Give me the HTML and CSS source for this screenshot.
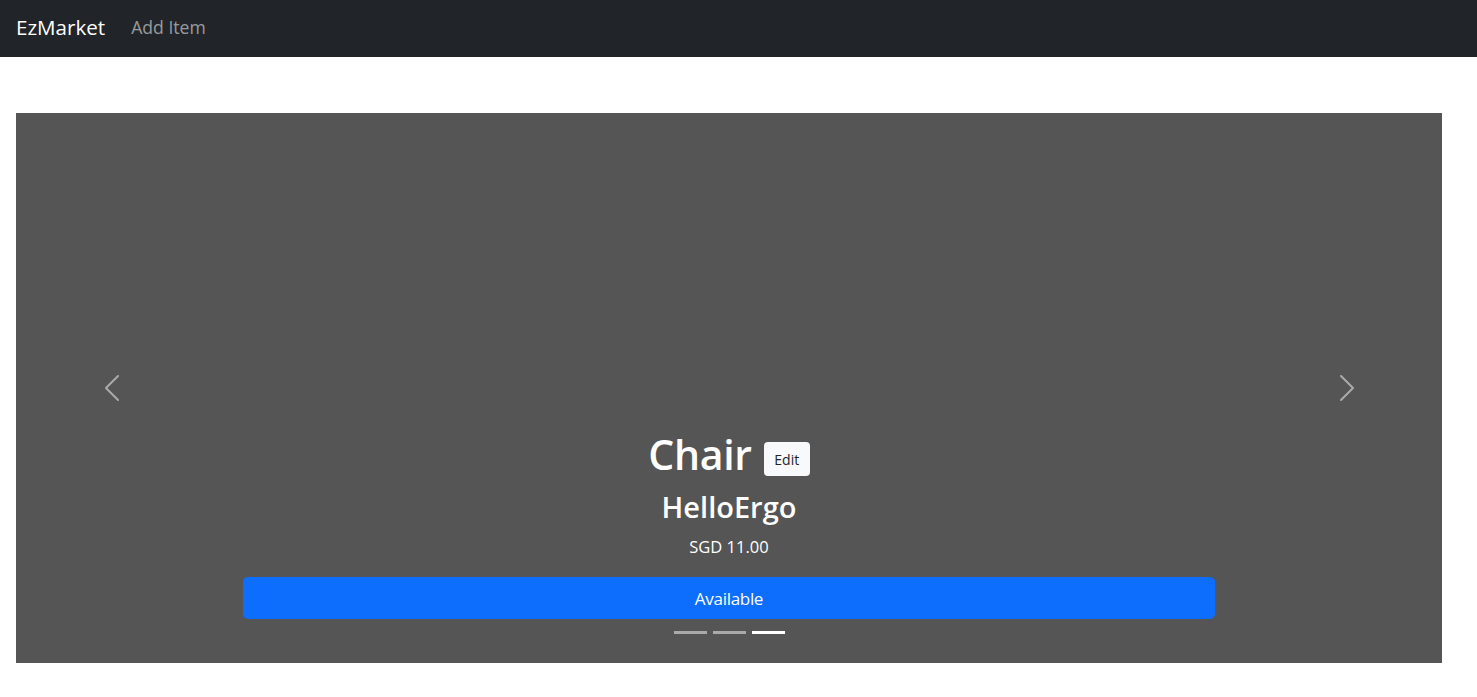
FILE: index.html
```html
<!DOCTYPE html>
<html lang="en">
<head>
<meta charset="utf-8">
<title>EzMarket</title>
<link rel="stylesheet" href="styles.css">
</head>
<body>
<nav class="navbar">
  <a class="brand" href="#">EzMarket</a>
  <a class="nav-link" href="#">Add Item</a>
</nav>
<main class="page">
  <section class="carousel">
    <button class="control" aria-label="Previous">
      <svg viewBox="0 0 16 16" width="32" height="32"><path fill="currentColor" d="M11.354 1.646a.5.5 0 0 1 0 .708L5.707 8l5.647 5.646a.5.5 0 0 1-.708.708l-6-6a.5.5 0 0 1 0-.708l6-6a.5.5 0 0 1 .708 0z"/></svg>
    </button>
    <div class="stage">
      <div class="caption">
        <div class="title-row">
          <h1 class="title">Chair</h1>
          <button class="btn-edit">Edit</button>
        </div>
        <h2 class="subtitle">HelloErgo</h2>
        <p class="price">SGD 11.00</p>
        <button class="btn-available">Available</button>
      </div>
      <div class="indicators">
        <span class="dot"></span>
        <span class="dot"></span>
        <span class="dot active"></span>
      </div>
    </div>
    <button class="control" aria-label="Next">
      <svg viewBox="0 0 16 16" width="32" height="32"><path fill="currentColor" d="M4.646 1.646a.5.5 0 0 1 .708 0l6 6a.5.5 0 0 1 0 .708l-6 6a.5.5 0 0 1-.708-.708L10.293 8 4.646 2.354a.5.5 0 0 1 0-.708z"/></svg>
    </button>
  </section>
</main>
</body>
</html>
```
FILE: styles.css
```css
* { box-sizing: border-box; }
html, body { margin: 0; padding: 0; }
body {
  font-family: "Open Sans", "Noto Sans", "Liberation Sans", sans-serif;
  background: #fff;
  color: #212529;
}
.navbar {
  height: 57px;
  background: #212529;
  display: flex;
  align-items: center;
  padding: 0 16px;
  gap: 26px;
}
.brand {
  color: #fff;
  font-size: 20.6px;
  text-decoration: none;
  margin-top: -3px;
}
.nav-link {
  color: rgba(255,255,255,.55);
  font-size: 17.6px;
  text-decoration: none;
  margin-top: -3px;
}
.page {
  padding: 56px 35px 0 16px;
}
.carousel {
  height: 550px;
  background: #555;
  display: flex;
}
.control {
  width: 191px;
  flex: none;
  background: none;
  border: 0;
  padding: 0;
  display: flex;
  align-items: center;
  justify-content: center;
  color: rgba(255,255,255,.5);
}
.stage {
  flex: 1;
  display: flex;
  flex-direction: column;
  justify-content: flex-end;
  align-items: stretch;
  padding: 0 36px 29px;
}
.caption {
  display: flex;
  flex-direction: column;
  align-items: center;
  color: #fff;
}
.title-row {
  display: flex;
  align-items: center;
  gap: 12px;
  height: 48px;
}
.title {
  margin: 0;
  font-size: 41px;
  font-weight: 600;
  line-height: 48px;
  letter-spacing: -0.3px;
}
.btn-edit {
  font-family: inherit;
  background: #f8f9fa;
  color: #212529;
  border: 0;
  border-radius: 4px;
  width: 46px;
  height: 34px;
  padding: 0;
  font-size: 14px;
  margin-top: 10px;
}
.subtitle {
  margin: 11px 0 0;
  font-size: 29px;
  font-weight: 600;
  line-height: 36px;
  letter-spacing: 0;
}
.price {
  margin: 10px 0 0;
  font-size: 16.5px;
  line-height: 24px;
  letter-spacing: 0;
}
.btn-available {
  font-family: inherit;
  margin-top: 18px;
  width: 100%;
  height: 42px;
  background: #0d6efd;
  color: #fff;
  border: 0;
  border-radius: 5px;
  font-size: 17px;
  letter-spacing: -0.3px;
}
.indicators {
  display: flex;
  justify-content: center;
  gap: 6px;
  margin-top: 12px;
  padding-left: 1px;
}
.dot {
  width: 33px;
  height: 3px;
  background: rgba(255,255,255,.5);
}
.dot.active { background: #fff; }
```
